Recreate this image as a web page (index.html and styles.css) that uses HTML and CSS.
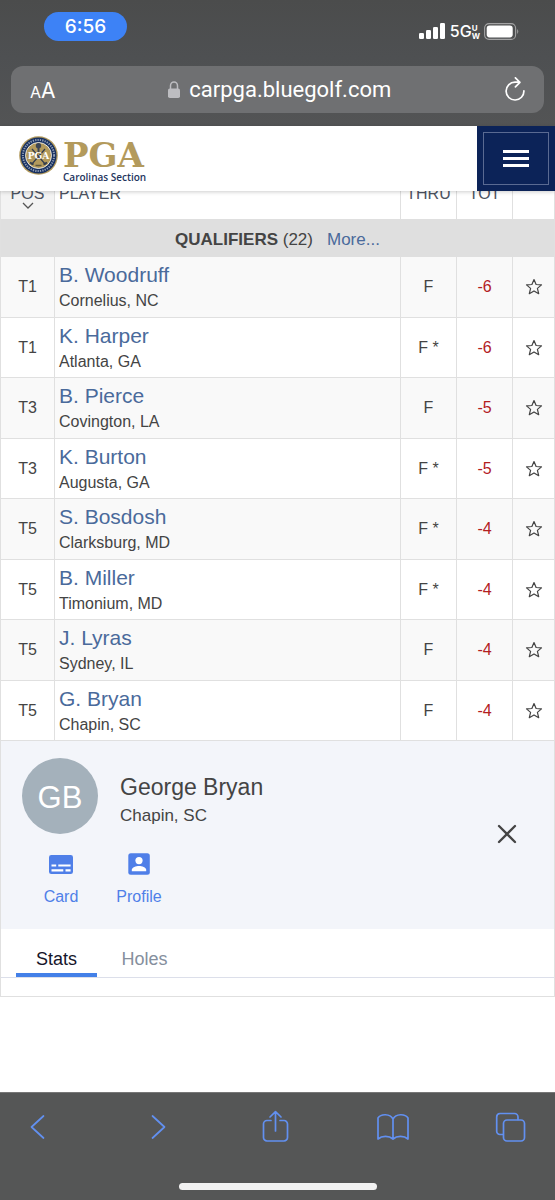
FILE: index.html
```html
<!DOCTYPE html>
<html lang="en">
<head>
<meta charset="utf-8">
<meta name="viewport" content="width=device-width, initial-scale=1">
<title>PGA Carolinas Section</title>
<link rel="stylesheet" href="styles.css">
</head>
<body>
<svg class="defs" aria-hidden="true">
  <symbol id="star" viewBox="0 0 18 18"><path d="M9 1.500l2.100 5 5.400.4-4.100 3.500 1.300 5.300L9 12.900l-4.700 2.800 1.300-5.300-4.100-3.500 5.400-.4z" fill="none" stroke="#444" stroke-width="1.2" stroke-linejoin="round"/></symbol>
</svg>

<div class="browser-top">
  <div class="status">
    <span class="clock">6:56</span>
    <div class="signals">
      <svg width="26" height="17" viewBox="0 0 26 17" fill="#fff" aria-hidden="true"><rect x="0" y="10" width="5" height="6" rx="1.3"/><rect x="7" y="7" width="5" height="9" rx="1.3"/><rect x="14" y="4" width="5" height="12" rx="1.3"/><rect x="21" y="0" width="5" height="16" rx="1.3"/></svg>
      <span class="network">5G</span>
      <span class="band"><span>U</span><span>W</span></span>
      <svg width="36" height="17" viewBox="0 0 36 17" aria-hidden="true"><rect x=".6" y=".6" width="31" height="15.8" rx="4.5" fill="none" stroke="#a3a3a4" stroke-width="1.1"/><rect x="2.7" y="2.6" width="26" height="11.8" rx="2.8" fill="#fff"/><path d="M33.2 6q2.2 2.5 0 5z" fill="#a3a3a4"/></svg>
    </div>
  </div>
  <div class="address">
    <button class="plain text-size" aria-label="Text size"><span class="small-a">A</span><span>A</span></button>
    <button class="plain url">
      <svg width="12" height="18" viewBox="0 0 12 18" aria-hidden="true"><rect x="0" y="7.5" width="12" height="9.5" rx="1.8" fill="#bdbdc1"/><path d="M2.5 8V4.8a3.5 3.9 0 0 1 7 0V8" fill="none" stroke="#bdbdc1" stroke-width="1.5"/></svg>
      <span>carpga.bluegolf.com</span>
    </button>
    <button class="plain reload" aria-label="Reload"><svg width="22" height="26" viewBox="0 0 22 26" fill="none" stroke="#fff" stroke-width="1.7" stroke-linecap="round" stroke-linejoin="round" aria-hidden="true"><path d="M15.800 5.200H11a8.900 8.900 0 1 0 8.900 8.600M11.400 .8l4.500 4.500-4.500 4.500"/></svg></button>
  </div>
</div>

<header class="site-header">
  <a class="brand" href="#">
    <svg width="39" height="39" viewBox="0 0 39 39" aria-hidden="true">
      <circle cx="19.5" cy="19.5" r="19.3" fill="#b39a5c"/><circle cx="19.5" cy="19.5" r="18" fill="#17305f"/>
      <circle cx="19.5" cy="19.5" r="15.6" fill="none" stroke="#8f9cb4" stroke-width="2" stroke-dasharray="1.3 1.1"/>
      <circle cx="19.5" cy="19.5" r="13" fill="#b39a5c" stroke="#fff" stroke-width=".8"/>
      <path d="M12.500 28.500L26 13M26.500 28.500L13 13" stroke="#333d4d" stroke-width="1.2"/>
      <path d="M11 26.500l3.500 2M28 26.500l-3.500 2" stroke="#333d4d" stroke-width="2"/>
      <circle cx="19.500" cy="9.800" r="2.700" fill="#3d4554"/><path d="M18.500 12h2v4h-2z" fill="#3d4554"/><path d="M16.500 29.500h6" stroke="#5d563f" stroke-width="1.500"/>
      <text class="seal-text" x="19.500" y="23" text-anchor="middle">PGA</text>
    </svg>
    <span class="wordmark"><span class="pga">PGA</span><span class="section">Carolinas Section</span></span>
  </a>
  <button class="menu" aria-label="Menu"><span class="menu-box"><span class="bar"></span><span class="bar"></span><span class="bar"></span></span></button>
</header>

<main class="content">
  <table class="board">
    <colgroup><col class="c-pos"><col><col class="c-score"><col class="c-score"><col class="c-star"></colgroup>
    <thead>
      <tr><th class="sorted">POS<svg width="12" height="7" viewBox="0 0 12 7" fill="none" stroke="#555" stroke-width="1.300" aria-hidden="true"><path d="M1 1l5 5 5-5"/></svg></th><th class="player">PLAYER</th><th>THRU</th><th>TOT</th><th></th></tr>
    </thead>
    <tbody class="group"><tr><td colspan="5"><b>QUALIFIERS</b> (22)<a href="#">More...</a></td></tr></tbody>
    <tbody class="rows">
      <tr><td>T1</td><td class="player"><a href="#">B. Woodruff</a><span>Cornelius, NC</span></td><td>F</td><td class="under">-6</td><td><button class="plain fav" aria-label="Follow B. Woodruff"><svg><use href="#star"/></svg></button></td></tr>
      <tr><td>T1</td><td class="player"><a href="#">K. Harper</a><span>Atlanta, GA</span></td><td>F *</td><td class="under">-6</td><td><button class="plain fav" aria-label="Follow K. Harper"><svg><use href="#star"/></svg></button></td></tr>
      <tr><td>T3</td><td class="player"><a href="#">B. Pierce</a><span>Covington, LA</span></td><td>F</td><td class="under">-5</td><td><button class="plain fav" aria-label="Follow B. Pierce"><svg><use href="#star"/></svg></button></td></tr>
      <tr><td>T3</td><td class="player"><a href="#">K. Burton</a><span>Augusta, GA</span></td><td>F *</td><td class="under">-5</td><td><button class="plain fav" aria-label="Follow K. Burton"><svg><use href="#star"/></svg></button></td></tr>
      <tr><td>T5</td><td class="player"><a href="#">S. Bosdosh</a><span>Clarksburg, MD</span></td><td>F *</td><td class="under">-4</td><td><button class="plain fav" aria-label="Follow S. Bosdosh"><svg><use href="#star"/></svg></button></td></tr>
      <tr><td>T5</td><td class="player"><a href="#">B. Miller</a><span>Timonium, MD</span></td><td>F *</td><td class="under">-4</td><td><button class="plain fav" aria-label="Follow B. Miller"><svg><use href="#star"/></svg></button></td></tr>
      <tr><td>T5</td><td class="player"><a href="#">J. Lyras</a><span>Sydney, IL</span></td><td>F</td><td class="under">-4</td><td><button class="plain fav" aria-label="Follow J. Lyras"><svg><use href="#star"/></svg></button></td></tr>
      <tr><td>T5</td><td class="player"><a href="#">G. Bryan</a><span>Chapin, SC</span></td><td>F</td><td class="under">-4</td><td><button class="plain fav" aria-label="Follow G. Bryan"><svg><use href="#star"/></svg></button></td></tr>
    </tbody>
  </table>

  <section class="detail">
    <div class="profile">
      <div class="profile-main">
        <div class="person">
          <div class="avatar">GB</div>
          <div class="who"><h2 class="name">George Bryan</h2><p class="town">Chapin, SC</p></div>
        </div>
        <div class="actions">
          <a href="#"><svg width="24" height="24" viewBox="0 0 24 24" aria-hidden="true"><rect x="0" y="3" width="24" height="19" rx="2.300" fill="#4f7fe8"/><path d="M2.500 13.500h4.700M9.300 13.500h12.300M2.500 18.300h11.800M16.500 18.300h5.100" stroke="#fff" stroke-width="2.200"/></svg>Card</a>
          <a href="#"><svg width="24" height="24" viewBox="0 0 24 24" aria-hidden="true"><rect x="1.300" y="1.300" width="21.500" height="21.500" rx="2.500" fill="#4f7fe8"/><circle cx="12" cy="8.600" r="3.600" fill="#fff"/><path d="M4.800 19.200v-1.400c0-2.500 4.300-3.800 7.200-3.800s7.200 1.300 7.200 3.800v1.400z" fill="#fff"/></svg>Profile</a>
        </div>
      </div>
      <button class="plain close" aria-label="Close"><svg width="20" height="20" viewBox="0 0 20 20" fill="none" stroke="#444" stroke-width="2.300" stroke-linecap="round" aria-hidden="true"><path d="M2 2l16 16M18 2L2 18"/></svg></button>
    </div>
    <div class="tabs" role="tablist">
      <button class="tab active" role="tab" aria-selected="true">Stats</button>
      <button class="tab" role="tab" aria-selected="false">Holes</button>
    </div>
    <div class="tab-panel" role="tabpanel"></div>
  </section>
</main>

<footer class="browser-bottom">
  <nav class="toolbar">
    <button class="plain" aria-label="Back"><svg width="32" height="32" viewBox="0 0 32 32"><path d="M21.500 5L9.500 16l12 11"/></svg></button>
    <button class="plain" aria-label="Forward"><svg width="32" height="32" viewBox="0 0 32 32"><path d="M12.500 5l12 11-12 11"/></svg></button>
    <button class="plain" aria-label="Share"><svg width="32" height="32" viewBox="0 0 32 32"><path d="M12 9.500H8a3.500 3.500 0 0 0-3.500 3.500v13.500A3.500 3.500 0 0 0 8 30h17a3.500 3.500 0 0 0 3.500-3.500V13A3.500 3.500 0 0 0 25 9.500h-4M16.500 20V1M11 6l5.500-5.300L22 6"/></svg></button>
    <button class="plain" aria-label="Bookmarks"><svg width="32" height="32" viewBox="0 0 32 32"><path d="M16 8C13 2.500 4 2.500 1 7v21c4-3.500 11-3.500 15 0 4-3.500 11-3.500 15 0V7C28 2.500 19 2.500 16 8zM16 8v20"/></svg></button>
    <button class="plain" aria-label="Tabs"><svg width="32" height="32" viewBox="0 0 32 32"><rect x="8.500" y="9" width="21" height="21" rx="3.500"/><path d="M8 23.500H5A3.300 3.300 0 0 1 1.700 20V6A3.500 3.500 0 0 1 5 2.500h14.500A3.500 3.500 0 0 1 23 6v2.500"/></svg></button>
  </nav>
  <div class="home-bar"></div>
</footer>
</body>
</html>
```
FILE: styles.css
```css
* { box-sizing: border-box; }
body {
  margin: 0;
  min-height: 100vh;
  display: flex;
  flex-direction: column;
  background: #fff;
  color: #444;
  font: 16px/24px "Liberation Sans", Arial, sans-serif;
}
a { text-decoration: none; color: #4a6a9b; }
button { font: inherit; }
.defs { display: none; }
.plain { background: none; border: 0; padding: 0; color: inherit; display: flex; align-items: center; justify-content: center; }

.browser-top {
  background: linear-gradient(#4b4c4c, #4e5052 45%, #535455);
  color: #fff;
  padding: 12px 11px 13px;
  font-family: Inter, sans-serif;
}
.status { display: flex; justify-content: space-between; padding: 0 24px 0 33px; }
.clock { width: 83px; height: 29px; border-radius: 15px; background: #3d82f6; text-align: center; font-size: 19px; line-height: 30px; font-weight: 500; }
.signals { display: flex; align-items: center; padding-top: 10px; }
.network { font-size: 16px; line-height: 17px; font-weight: 500; margin-left: 5px; }
.band { display: flex; flex-direction: column; font-size: 8px; line-height: 8px; font-weight: 700; margin-right: 4px; }
.address { display: flex; justify-content: space-between; align-items: center; height: 47px; margin-top: 25px; padding: 0 18px 0 19px; border-radius: 12px; background: #6f7072; }
.text-size { font-size: 21px; line-height: 28px; padding-top: 3px; align-items: baseline; }
.small-a { font-size: 16px; }
.url { gap: 9px; font: 22px/24px Roboto, sans-serif; padding-top: 1px; }

.site-header { position: relative; z-index: 1; display: flex; justify-content: space-between; height: 65px; background: #fff; box-shadow: 0 1px 4px rgba(0, 0, 0, .2); }
.brand { display: flex; gap: 5px; padding: 10px 0 0 19px; }
.seal-text { font: bold 9px "DejaVu Serif", serif; fill: #fff; }
.wordmark { display: flex; flex-direction: column; padding-top: 2px; }
.pga { font: bold 34px/34px "DejaVu Serif", serif; color: #b39a5c; }
.section { font: 600 10px/11px "Open Sans", sans-serif; color: #24355e; }
.menu { width: 78px; border: 0; padding: 6px; background: #0c2358; }
.menu-box { display: flex; flex-direction: column; align-items: center; justify-content: center; gap: 4px; height: 100%; border: 1px solid #5a6a92; }
.bar { width: 26px; height: 3px; background: #fff; }

.content { flex: 1; }
.board { width: 100%; margin-top: -13px; border: 1px solid #e0e0e0; border-width: 0 1px; border-spacing: 0; table-layout: fixed; text-align: center; }
.c-pos { width: 54px; }
.c-score { width: 56px; }
.c-star { width: 41px; }
.board th, .board td { padding: 0; border-right: 1px solid #e0e0e0; }
.board th:last-child, .board td:last-child { border-right: 0; }
.board th { height: 41px; padding-top: 4px; vertical-align: top; font-weight: 400; color: #4c5362; }
.board .sorted { background: #f3f3f3; }
.sorted svg { display: block; margin: -4px auto 0; }
.board .player { padding-left: 4px; text-align: left; }
.board .group td { height: 38px; padding-top: 3px; background: #dfdfdf; font-size: 17px; }
.group a { margin-left: 14px; }
.rows tr { height: 60px; }
.rows tr:nth-child(odd) { height: 61px; background: #f9f9f9; }
.rows td { border-bottom: 1px solid #e0e0e0; }
.player a { display: block; font-size: 21px; line-height: 28px; }
.player span { display: block; }
.board .under { color: #b3201f; }
.fav { width: 100%; }
.fav svg { width: 18px; height: 18px; }

.detail { border: 1px solid #e0e0e0; border-top: 0; }
.profile { display: flex; justify-content: space-between; align-items: center; padding: 17px 37px 20px 21px; background: #f3f5fa; }
.person { display: flex; align-items: center; gap: 22px; }
.avatar { width: 76px; height: 76px; border-radius: 50%; background: #a4b1bb; color: #fff; text-align: center; font-size: 31px; line-height: 79px; }
.who { padding-top: 8px; }
.name { margin: 0; font-size: 23px; line-height: 32px; font-weight: 400; }
.town { margin: 0; font-size: 17px; line-height: 26px; }
.actions { display: flex; margin-top: 18px; }
.actions a { width: 78px; display: flex; flex-direction: column; align-items: center; gap: 9px; color: #4f7fe8; }
.tabs { display: flex; height: 49px; padding-left: 15px; border-bottom: 1px solid #dcdfea; }
.tab { width: 81px; padding: 16px 0 0; border: 0; border-bottom: 4px solid transparent; background: none; font-size: 18px; color: #858f9d; }
.tab + .tab { margin-left: 7px; }
.tab.active { color: #15152a; border-bottom-color: #4380e8; }
.tab-panel { height: 18px; }

.browser-bottom { height: 108px; background: #555656; border-top: 1px solid #777; }
.toolbar { display: flex; justify-content: space-between; padding: 12px 22px 0 16px; }
.toolbar button { width: 44px; height: 44px; }
.toolbar svg { fill: none; stroke: #6290f0; stroke-width: 1.7; stroke-linecap: round; stroke-linejoin: round; overflow: visible; }
.home-bar { width: 198px; max-width: 50%; height: 7px; margin: 34px auto 0; border-radius: 4px; background: #f2f2f2; }
```
